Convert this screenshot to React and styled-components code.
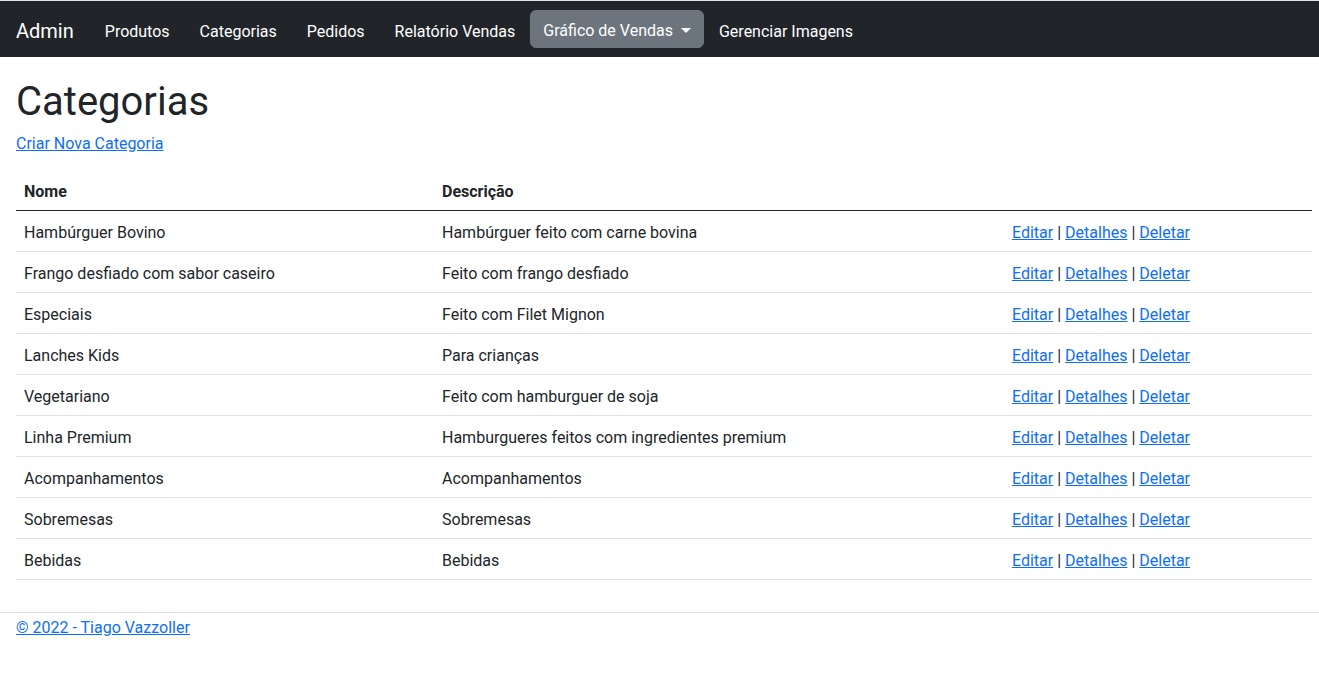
import React from "react";
import styled, { createGlobalStyle } from "styled-components";

const Global = createGlobalStyle`
  html, body { margin: 0; padding: 0; }
  body {
    font-family: Roboto, "Noto Sans", sans-serif;
    font-size: 16px;
    line-height: 1.5;
    color: #212529;
    background: #fff;
    border-top: 1px solid #dee2e6;
  }
  * { box-sizing: border-box; }
`;

const Navbar = styled.nav`
  background: #212529;
  height: 56px;
  display: flex;
  align-items: center;
  padding: 0 16px;
`;

const Brand = styled.a`
  color: #fff;
  font-size: 20px;
  line-height: 30px;
  padding-top: 4px;
  margin-right: 16px;
  text-decoration: none;
`;

const NavList = styled.ul`
  display: flex;
  align-items: center;
  list-style: none;
  margin: 0;
  padding: 0;
`;

const NavLink = styled.a`
  color: #fff;
  text-decoration: none;
  padding: 11px 15px 5px;
  display: block;
`;

const DropButton = styled.button`
  font: inherit;
  color: #fff;
  background: #6c757d;
  border: 1px solid #6c757d;
  border-radius: 6px;
  padding: 8px 12px 4px;
  line-height: 24px;
  display: flex;
  align-items: center;
`;

const Caret = styled.span`
  display: inline-block;
  margin-left: 8px;
  margin-top: -2px;
  border-top: 5px solid #fff;
  border-left: 5px solid transparent;
  border-right: 5px solid transparent;
`;

const Main = styled.main`
  padding: 21px 7px 16px 16px;
`;

const Title = styled.h1`
  font-size: 40px;
  font-weight: 400;
  line-height: 1.2;
  margin: 0 0 6px;
`;

const Link = styled.a`
  color: #0d6efd;
  text-decoration: underline;
  cursor: pointer;
`;

const P = styled.p`
  margin: 0 0 14px;
`;

const Table = styled.table`
  width: 100%;
  border-collapse: collapse;
  margin-bottom: 16px;
`;

const Th = styled.th`
  text-align: left;
  font-weight: 700;
  padding: 10px 8px 6px;
  border-bottom: 1px solid #212529;
  width: ${(p) => p.$w || "auto"};
`;

const Td = styled.td`
  padding: 10px 8px 6px;
  border-bottom: 1px solid #dee2e6;
`;

const Footer = styled.footer`
  border-top: 1px solid #dee2e6;
  padding: 3px 16px 1px;
  line-height: 24px;
`;

const rows = [
  ["Hambúrguer Bovino", "Hambúrguer feito com carne bovina"],
  ["Frango desfiado com sabor caseiro", "Feito com frango desfiado"],
  ["Especiais", "Feito com Filet Mignon"],
  ["Lanches Kids", "Para crianças"],
  ["Vegetariano", "Feito com hamburguer de soja"],
  ["Linha Premium", "Hamburgueres feitos com ingredientes premium"],
  ["Acompanhamentos", "Acompanhamentos"],
  ["Sobremesas", "Sobremesas"],
  ["Bebidas", "Bebidas"],
];

export default function App() {
  return (
    <>
      <Global />
      <Navbar>
        <Brand>Admin</Brand>
        <NavList>
          <li><NavLink>Produtos</NavLink></li>
          <li><NavLink>Categorias</NavLink></li>
          <li><NavLink>Pedidos</NavLink></li>
          <li><NavLink>Relatório Vendas</NavLink></li>
          <li>
            <DropButton>
              Gráfico de Vendas
              <Caret />
            </DropButton>
          </li>
          <li><NavLink>Gerenciar Imagens</NavLink></li>
        </NavList>
      </Navbar>
      <Main>
        <Title>Categorias</Title>
        <P>
          <Link>Criar Nova Categoria</Link>
        </P>
        <Table>
          <thead>
            <tr>
              <Th $w="418px">Nome</Th>
              <Th $w="570px">Descrição</Th>
              <Th />
            </tr>
          </thead>
          <tbody>
            {rows.map(([n, d]) => (
              <tr key={n}>
                <Td>{n}</Td>
                <Td>{d}</Td>
                <Td>
                  <Link>Editar</Link> | <Link>Detalhes</Link> | <Link>Deletar</Link>
                </Td>
              </tr>
            ))}
          </tbody>
        </Table>
      </Main>
      <Footer>
        <Link>© 2022 - Tiago Vazzoller</Link>
      </Footer>
    </>
  );
}
